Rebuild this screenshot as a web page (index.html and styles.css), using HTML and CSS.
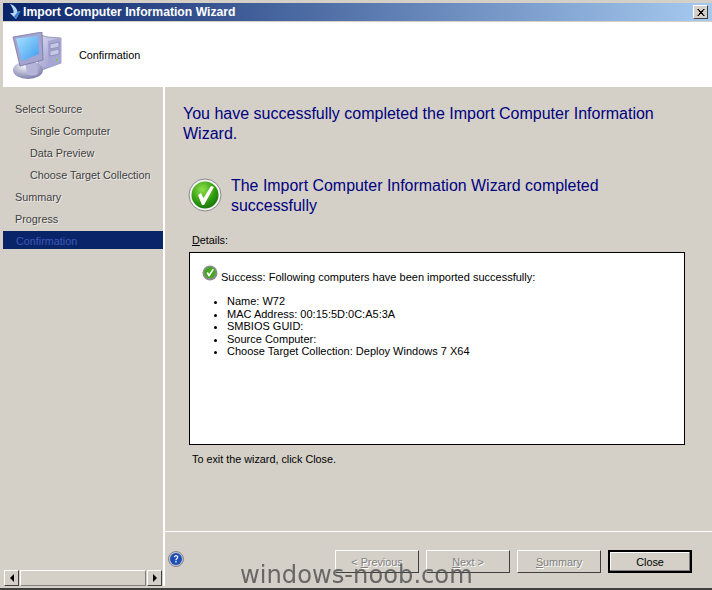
FILE: index.html
```html
<!DOCTYPE html>
<html lang="en">
<head>
<meta charset="utf-8">
<title>Import Computer Information Wizard</title>
<link rel="stylesheet" href="styles.css">
</head>
<body>
<div class="window">
  <div class="titlebar">
    <svg class="title-icon" width="16" height="16" viewBox="0 0 16 16">
      <path d="M3 0 C7 1 10 4 10.500 8 L13.500 7 L9 15 L3 9 L6.500 9 C7 6 5 3 3 0Z" fill="#b5d8f7"/>
      <path d="M10.500 8 L13.500 7 L9 15 L7 12.500Z" fill="#3f7fd0"/>
    </svg>
    <span class="title-text">Import Computer Information Wizard</span>
    <button class="close-x" aria-label="Close">
      <svg width="8" height="7" viewBox="0 0 8 7"><path d="M0 0h2v1h1v1h2v-1h1v-1h2L6 2v1h-1v1h1v1l2 2h-2v-1h-1v-1h-2v1h-1v1h-2l2-2v-1h1v-1h-1v-1z" fill="#000"/></svg>
    </button>
  </div>
  <header class="banner">
    <svg class="pc-icon" width="52" height="48" viewBox="0 0 52 48">
      <defs>
        <linearGradient id="screen" x1="0" y1="0" x2="1" y2="1"><stop offset="0" stop-color="#a8e2ff"/><stop offset="1" stop-color="#3f9cf0"/></linearGradient>
        <linearGradient id="tower" x1="0" y1="0" x2="1" y2="1"><stop offset="0" stop-color="#dcdcf2"/><stop offset="1" stop-color="#8a8ac0"/></linearGradient>
        <radialGradient id="base" cx=".4" cy=".3" r=".8"><stop offset="0" stop-color="#f4f4fa"/><stop offset="1" stop-color="#6e6ea4"/></radialGradient>
      </defs>
      <path d="M28 3 L36 5 L49 6 V31 L30 38 L26 33Z" fill="url(#tower)" stroke="#70709c" stroke-width=".6"/>
      <path d="M36 9 L49 6 V31 L36 36Z" fill="#a6a6d2"/>
      <path d="M38 12 L47 10 V15 L38 17Z M38 19 L47 17 V22 L38 24Z" fill="#c8c8e6" stroke="#6a6a9c" stroke-width=".5"/>
      <rect x="44" y="27" width="2" height="2" fill="#7ec850"/>
      <ellipse cx="16" cy="38" rx="15" ry="9" fill="url(#base)"/>
      <path d="M13 29 H24 L26 42 Q20 45 15 42Z" fill="#b4b4d8"/>
      <path d="M1 5 L30 0 L31 28 L8 34Z" fill="#a4a4d0" stroke="#6c6c9a" stroke-width=".7"/>
      <path d="M4 6.500 L26 4 L27 22 L10 29Z" fill="url(#screen)"/>
    </svg>
    <span class="banner-title">Confirmation</span>
  </header>
  <div class="content">
    <aside class="side">
      <nav class="steps">
        <div class="step">Select Source</div>
        <div class="step sub">Single Computer</div>
        <div class="step sub">Data Preview</div>
        <div class="step sub">Choose Target Collection</div>
        <div class="step">Summary</div>
        <div class="step">Progress</div>
        <div class="step current">Confirmation</div>
      </nav>
      <div class="scrollbar">
        <span class="sb-btn"><i class="arrow-left"></i></span>
        <span class="sb-track"></span>
        <span class="sb-btn"><i class="arrow-right"></i></span>
      </div>
    </aside>
    <main class="main">
      <div class="body">
        <h1 class="headline">You have successfully completed the Import Computer Information Wizard.</h1>
        <div class="result">
          <svg class="ok-big" width="34" height="34" viewBox="0 0 34 34">
            <defs>
              <radialGradient id="g1" cx=".4" cy=".3" r=".8"><stop offset="0" stop-color="#8fe04a"/><stop offset=".6" stop-color="#2f9a10"/><stop offset="1" stop-color="#0e6a08"/></radialGradient>
            </defs>
            <circle cx="17" cy="17" r="16" fill="#f4f4f4" stroke="#8a8a8a"/>
            <circle cx="17" cy="17" r="13.500" fill="url(#g1)"/>
            <path d="M10 17 L13 15 L15.500 20 L23 8 L26 9 L16 27 L14 27Z" fill="#fff"/>
          </svg>
          <h2 class="result-text">The Import Computer Information Wizard completed successfully</h2>
        </div>
        <div class="details-label"><u>D</u>etails:</div>
        <div class="details">
          <div class="success-line">
            <svg class="ok-small" width="16" height="16" viewBox="0 0 16 16">
              <circle cx="8" cy="8" r="7.500" fill="#8c8c8c"/>
              <circle cx="8" cy="7.500" r="5.500" fill="#43a81c"/>
              <path d="M4.500 8 L6 7 L7 9 L10.500 4 L12 4.500 L7.500 11.500 L6.500 11.500Z" fill="#fff"/>
            </svg>
            <span class="success-text">Success: Following computers have been imported successfully:</span>
          </div>
          <ul class="facts">
            <li>Name: W72</li>
            <li>MAC Address: 00:15:5D:0C:A5:3A</li>
            <li>SMBIOS GUID:</li>
            <li>Source Computer:</li>
            <li>Choose Target Collection: Deploy Windows 7 X64</li>
          </ul>
        </div>
        <div class="exit-note">To exit the wizard, click Close.</div>
      </div>
      <footer class="footer">
        <svg class="help" width="16" height="16" viewBox="0 0 16 16">
          <circle cx="8" cy="8" r="7.500" fill="#c4c4cc" stroke="#85858f"/>
          <circle cx="8" cy="8" r="6" fill="#1f4fb4"/>
          <path d="M5.800 6 C6 3.800 10.300 3.800 10.300 6.200 C10.300 7.800 8.500 7.800 8.500 9.300 H7.300 C7.300 7.300 9 7.300 9 6.200 C9 5 7.200 5 7 6.300Z M7.300 10 H8.600 V11.500 H7.300Z" fill="#fff"/>
        </svg>
        <div class="buttons">
          <button class="btn" disabled>&lt; <u>P</u>revious</button>
          <button class="btn" disabled><u>N</u>ext &gt;</button>
          <button class="btn" disabled><u>S</u>ummary</button>
          <button class="btn primary">Close</button>
        </div>
      </footer>
    </main>
  </div>
  <div class="watermark">windows-noob.com</div>
</div>
</body>
</html>
```

FILE: styles.css
```css
* { box-sizing: border-box; }
html, body { margin: 0; padding: 0; }
body { width: 712px; height: 590px; overflow: hidden; background: #d4d0c8; font-family: "Liberation Sans", Arial, sans-serif; }
.window { position: relative; width: 712px; height: 590px; background: #d4d0c8; padding: 3px 0 2px 3px; display: flex; flex-direction: column; border-bottom: 2px solid #404040; }
.titlebar { height: 18px; flex: none; display: flex; align-items: center; padding: 0 4px; background: linear-gradient(90deg, #0a246a, #a6caf0); }
.title-icon { flex: none; }
.title-text { flex: 1; color: #fff; font-weight: bold; font-size: 12.2px; }
.close-x { width: 15px; height: 14px; padding: 0; display: flex; align-items: center; justify-content: center; background: #d4d0c8; border: 1px solid; border-color: #fff #404040 #404040 #fff; }
.banner { height: 65px; flex: none; background: #fff; margin-top: 1px; display: flex; align-items: center; padding-left: 9px; }
.pc-icon { flex: none; margin-top: 3px; }
.banner-title { margin-left: 15px; font-size: 10.8px; color: #000; }
.content { flex: 1; display: flex; min-height: 0; }
.side { width: 160px; flex: none; display: flex; flex-direction: column; justify-content: space-between; padding-top: 11px; }
.step { height: 22px; line-height: 22px; padding-left: 12px; font-size: 10.8px; color: #3f3f3f; text-shadow: 1px 1px 0 rgba(255,255,255,.6); }
.step.sub { padding-left: 27px; }
.step.current { height: 18px; line-height: 21px; margin-top: 1px; padding-left: 13px; background: #0a246a; color: #3a5ab5; text-shadow: none; }
.scrollbar { height: 16px; margin: 0 1px; display: flex; gap: 1px; }
.sb-btn { width: 15px; flex: none; background: #d4d0c8; border: 1px solid; border-color: #fff #404040 #404040 #fff; display: flex; align-items: center; justify-content: center; }
.sb-track { flex: 1; background: #d4d0c8; border: 1px solid; border-color: #fff #808080 #808080 #fff; }
.arrow-left { border: 4px solid transparent; border-left: 0; border-right-color: #000; }
.arrow-right { border: 4px solid transparent; border-right: 0; border-left-color: #000; }
.main { flex: 1; min-width: 0; margin-left: 2px; display: flex; flex-direction: column; position: relative; }
.side + .main::before { content: ""; position: absolute; left: -2px; top: 0; bottom: 0; width: 2px; background: #fff; }
.body { flex: 1; padding: 17px 27px 0 18px; }
.headline { margin: 0; font-size: 16px; line-height: 20px; font-weight: normal; color: #00007f; }
.result { display: flex; margin-top: 32px; padding-left: 5px; }
.ok-big { flex: none; margin-top: 2px; }
.result-text { margin: 0 0 0 9px; font-size: 15.95px; line-height: 20px; font-weight: normal; color: #00007f; }
.details-label { margin: 17px 0 0 9px; font-size: 10.8px; line-height: 14px; color: #000; }
.details { margin: 5px 0 0 6px; height: 193px; background: #fff; border: 1px solid #000; padding: 12px 0 0 12px; font-size: 11px; line-height: 12.500px; color: #000; }
.success-line { display: flex; align-items: flex-end; }
.ok-small { flex: none; margin-right: 3px; }
.success-text { margin-bottom: -2px; }
.facts { margin: 14px 0 0; padding: 0 0 0 25px; }
.exit-note { margin: 7px 0 0 9px; font-size: 10.8px; line-height: 14px; color: #000; }
.footer { height: 55px; flex: none; border-top: 1px solid #fff; display: flex; position: relative; padding: 18px 19px 0 170px; }
.help { position: absolute; left: 3px; top: 19px; }
.buttons { display: flex; gap: 7px; }
.btn { width: 84px; height: 23px; padding: 0; background: #d4d0c8; border: 1px solid; border-color: #fff #404040 #404040 #fff; font: 10.8px "Liberation Sans", Arial, sans-serif; color: #000; }
.btn:disabled { color: #808080; text-shadow: 1px 1px 0 #fff; }
.btn.primary { border: 2px solid #000; box-shadow: inset -1px -1px 0 #808080, inset 1px 1px 0 #fff; }
.watermark { position: absolute; left: 240px; top: 558px; font-family: "DejaVu Sans", Verdana, sans-serif; font-size: 24.2px; line-height: 34px; color: #555; opacity: .85; white-space: nowrap; }
```
